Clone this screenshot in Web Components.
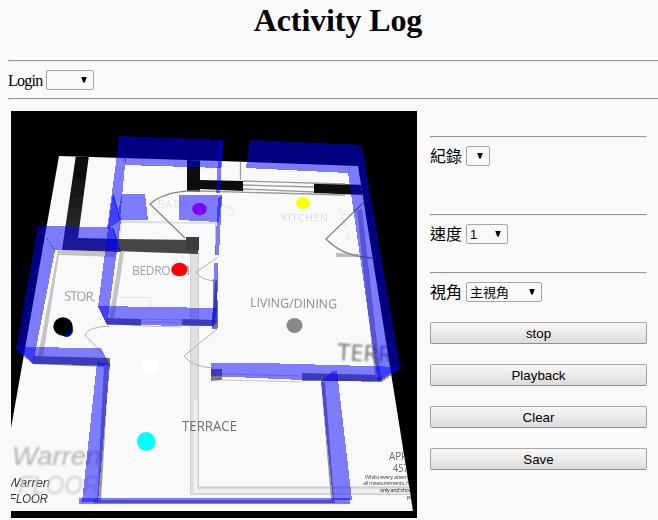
<!DOCTYPE html>
<html lang="zh-Hant">
<head>
<meta charset="utf-8">
<title>Activity Log</title>
<style>
html{height:100%;overflow:hidden}
body{margin:0;height:520px;overflow:hidden;background:#f9f9f9;color:#000;font-family:"Liberation Serif","Noto Sans CJK TC",serif;font-size:16px}
</style>
</head>
<body>
<activity-page></activity-page>
<script>
class UiElement extends HTMLElement {
  render(html) { this.attachShadow({mode:'open'}).innerHTML = html; }
}

customElements.define('rule-line', class extends UiElement {
  connectedCallback() { this.render(`<style>:host{display:block;box-sizing:border-box;height:2px;border:1px solid;border-color:#969696 #eee #eee #969696}</style>`); }
});

customElements.define('drop-box', class extends UiElement {
  connectedCallback() { this.render(`<style>
    :host{display:flex;box-sizing:border-box;height:20px;align-items:center;justify-content:space-between;border:1px solid #a6a6a6;border-radius:2px;padding:0 6px 0 3px;font:13px/18px "Liberation Sans","Noto Sans CJK TC",sans-serif;white-space:nowrap}
    svg{margin-left:auto;display:block}
    span{padding-top:1px}
    </style><span><slot></slot></span><svg width="6" height="6" viewBox="0 0 6 6"><path d="M.3 0h5.4L3.8 5.500H2.200z"/></svg>`); }
});

customElements.define('labeled-field', class extends UiElement {
  connectedCallback() { this.render(`<style>
    :host{display:flex;align-items:center;height:20px;gap:4px;line-height:20px;white-space:nowrap}
    span{padding-top:2px;line-height:18px}
    </style><span>${this.getAttribute('label')}</span><slot></slot>`); }
});

customElements.define('push-button', class extends UiElement {
  connectedCallback() { this.render(`<style>
    :host{display:block}
    button{display:block;width:100%;height:22px;box-sizing:border-box;padding:1px 0 0;border:1px solid;border-color:#a8a8a8 #a0a0a0 #8e8e8e;border-radius:2px;background:linear-gradient(#f6f6f6,#ececec 45%,#dcdcdc);color:#000;font:13.33px/18px "Liberation Sans",sans-serif}
    </style><button><slot></slot></button>`); }
});

customElements.define('floor-view', class extends UiElement {
  connectedCallback() { this.render(`<style>
    :host{display:block;width:406px;height:407px;background:#000}
    svg{display:block}
    .plan text{font-family:"Open Sans","Noto Sans",sans-serif}
    .thin{fill:none;stroke:#858585;stroke-width:1.3}
    .frame{fill:none;stroke:#c4c4c4;stroke-width:1}
    .faint{fill:none;stroke:#e4e4e4;stroke-width:1}
    .arc{fill:none;stroke:#b0b0b0;stroke-width:1}
    .brand text{font-family:"Liberation Sans",sans-serif;font-style:italic}
    .wall{fill:#00f;fill-opacity:.5}
    </style>
    <svg width="406" height="407" viewBox="11 111 406 407">
    <defs>
      <clipPath id="floor"><path d="M59 156L220 161 358 166 413 511H11V428z"/></clipPath>
      <linearGradient id="pier" x1="0" y1="0" x2="0" y2="1"><stop offset="0" stop-color="#050505"/><stop offset="1" stop-color="#353535"/></linearGradient>
      <filter id="soft" x="-5%" y="-20%" width="110%" height="140%"><feGaussianBlur stdDeviation=".45"/></filter>
      <filter id="smear" x="-5%" y="-20%" width="110%" height="140%"><feGaussianBlur stdDeviation=".9"/></filter>
    </defs>
    <g class="plan" clip-path="url(#floor)">
      <path fill="#f9f9f9" d="M11 111H417V511H11z"/>
      <g filter="url(#soft)">
        <path fill="#e0e0e0" d="M190 252H199V486H417V495H190z"/>
        <path fill="none" stroke="#f2f2f2" stroke-width="3" d="M195.500 400V491H417"/>
        <path fill="none" stroke="#cfcfcf" d="M190.500 252V494.500H417M198.500 252V487.500H417"/>
        <path fill="#c4c4c4" d="M58 250L117 252 116 257 59 255 43 357 38 356z"/>
        <path fill="#c4c4c4" d="M120 252L124 252 114 320 109 320z"/>
        <path fill="#dedede" d="M123 220L184 222 218 222 218 224 122 223 120 238 116 238 120 210z"/>
        <path fill="url(#pier)" d="M76 155H89L78 238 121 239 121 252 62 250z"/>
        <path fill="#444" d="M116 239L199 240 198 254 115 251z"/>
        <path fill="#3c3c3c" d="M186 237H199V250H186z"/>
        <path fill="#111" d="M187 156H200V180L243 181V191L200 189V192L187 191z"/>
        <path fill="#111" d="M314 183L365 185V195L314 193z"/>
        <path fill="#777" d="M33 356L110 358V367L33 364z"/>
        <path fill="#777" d="M107 318L141 319V326L107 324zM182 319L217 320V329H212V326L182 325z"/>
        <path fill="#777" d="M215 281H218V328H212z"/>
        <path fill="#777" d="M211 369H222V380L211 381zM302 373L381 375 382 381 302 381z"/>
        <path fill="#aaa" d="M357 210L362 209 381 378 375 377z"/>
        <path fill="#bbb" d="M336 253L360 254V257L336 257z"/>
        <path fill="#999" d="M104 364H109L101 501H97zM321 382L325 382 334 500 331 500zM94 500H335V503H94z"/>
      </g>
      <path class="thin" style="stroke:#999" d="M243 181L345 184M243 185L314 187M243 189L314 192M240.500 161V180M200 191L345 195"/>
      <path class="frame" d="M141 319L182 320M141 322L182 323M141 326L182 327M222 374L302 376M222 380L302 382M215.500 223V255"/>
      <path class="faint" d="M119 297.500H150.500V308M217.500 265V300M154 222L217 224M217 205Q245 209 228 216M339 207L346 228M342 214L356 216"/>
      <path class="thin" d="M200 191Q166 190 150 204L185 238M363 203L326 239Q343 257 373 258"/>
      <path class="arc" d="M109 326Q88 327 85 335L103 354M217 258L196 272Q201 281 218 281M217 329L184 356Q191 366 212 368"/>
      <g filter="url(#soft)">
        <text x="64" y="300.500" font-size="13" textLength="32" fill="#a0a0a0" transform="rotate(1 63 301)">STOR.</text>
        <text x="132" y="275" font-size="12" textLength="58" fill="#a3a3a3">BEDROOM</text>
        <text x="158" y="208" font-size="10.500" textLength="29" fill="#e2e2e2">BATH</text>
        <text x="281" y="221" font-size="10.500" textLength="47" fill="#dadada" transform="rotate(1 281 221)">KITCHEN</text>
        <text x="250" y="307" font-size="12.500" textLength="87" fill="#8c8c8c" transform="rotate(1 250 307)">LIVING/DINING</text>
        <text x="182" y="430.500" font-size="14.500" textLength="55" lengthAdjust="spacingAndGlyphs" fill="#6f6f6f">TERRACE</text>
        <text x="389" y="460" font-size="11" textLength="24" lengthAdjust="spacingAndGlyphs" fill="#666">APPR</text>
        <text x="393" y="472" font-size="11" textLength="23" lengthAdjust="spacingAndGlyphs" fill="#666">457.0</text>
        <text x="365" y="478.500" font-size="5.500" textLength="52" fill="#444">Whilst every attempt h</text>
        <text x="363" y="485" font-size="5.500" textLength="54" fill="#444">all measurements, floor</text>
        <text x="380" y="492" font-size="5.500" textLength="36" fill="#222">only and should</text>
        <text x="407" y="499" font-size="5.500" fill="#222">pr</text>
        <text x="345" y="240" font-size="9" fill="#e2e2e2" transform="rotate(5 345 240)">K</text>
        <g class="brand" fill="#333" font-size="13"><text x="8" y="487" textLength="42" lengthAdjust="spacingAndGlyphs">Warren</text><text x="9" y="502.500" textLength="39" lengthAdjust="spacingAndGlyphs">FLOOR</text></g>
      </g>
      <g filter="url(#smear)">
        <text x="337" y="360" font-size="23" textLength="70" lengthAdjust="spacingAndGlyphs" fill="#6c6c6c" transform="rotate(3 337 360)">TERRA</text>
        <g class="brand" fill="#b4b4b4" font-size="26"><text x="12" y="464.500" textLength="89" lengthAdjust="spacingAndGlyphs">Warren</text><text x="18" y="494" textLength="82" lengthAdjust="spacingAndGlyphs" fill="#cfcfcf">FLOOR</text></g>
      </g>
    </g>
    <g class="wall" shape-rendering="crispEdges">
      <path d="M118 136L223 140 221 168 125 165z"/>
      <path d="M119 140L125 165 120 220 119 222 107 229z"/>
      <path d="M113 193L121 220 107 325 98 307 108 228z"/>
      <path d="M122 194H145L148 220H120L119 208z"/>
      <path d="M179 195L222 195 219 222 179 220z"/>
      <path d="M219 141H223L220 193H216z"/>
      <path d="M218 198L222 196 219 255H215z"/>
      <path d="M214 263H218L217 322 212 328z"/>
      <path d="M98 306L217 308 214 326 107 325z"/>
      <path d="M38 226L107 227 114 228 120 250 54 250z"/>
      <path d="M38 226L55 250 33 364 16 350z"/>
      <path d="M16 347L101 348 110 365 33 364z"/>
      <path d="M97 362L110 364 98 502H82z"/>
      <path d="M79 498H350V504H79z"/>
      <path d="M321 381L333 371H337L352 500H333z"/>
      <path d="M211 363L263 363 402 367 399 370 381 382 302 380 211 376z"/>
      <path d="M348 172L362 146 400 367 378 382z"/>
      <path d="M250 140L362 145 348 173 246 168z"/>
    </g>
    <g fill="none" stroke="#00f" stroke-opacity=".42" stroke-width="1.300">
      <path d="M119 137L126 163M113 194L120 219M113 229L119 249"/>
    </g>
    <ellipse cx="199.500" cy="209" rx="7.200" ry="6.200" fill="#8000ff"/>
    <ellipse cx="303" cy="203" rx="7" ry="6" fill="#ff0"/>
    <ellipse cx="179.500" cy="269.500" rx="8" ry="6.800" fill="red"/>
    <ellipse cx="66.500" cy="330" rx="6.500" ry="7" fill="#00f"/>
    <ellipse cx="63" cy="326.500" rx="9.700" ry="9.300"/>
    <ellipse cx="294.500" cy="325.500" rx="8" ry="7.500" fill="#888"/>
    <ellipse cx="150.500" cy="366.500" rx="8.700" ry="8.300" fill="#fff"/>
    <ellipse cx="146.200" cy="441.500" rx="9.200" ry="9.500" fill="#0ff"/>
    </svg>`); }
});

customElements.define('control-panel', class extends UiElement {
  connectedCallback() { this.render(`<style>
    :host{display:flex;flex-direction:column;width:217px;padding-top:25px}
    labeled-field{margin-top:8px}
    .first{margin-bottom:48px}.second{margin-bottom:28px}
    push-button{margin-top:20px}
    </style>
    <rule-line></rule-line>
    <labeled-field class="first" label="紀錄"><drop-box style="width:24px"></drop-box></labeled-field>
    <rule-line></rule-line>
    <labeled-field class="second" label="速度"><drop-box style="width:42px">1</drop-box></labeled-field>
    <rule-line></rule-line>
    <labeled-field label="視角"><drop-box style="width:76px">主視角</drop-box></labeled-field>
    <push-button>stop</push-button><push-button>Playback</push-button><push-button>Clear</push-button><push-button>Save</push-button>`); }
});

customElements.define('activity-page', class extends UiElement {
  connectedCallback() { this.render(`<style>
    :host{display:block;width:660px;margin-left:8px}
    h1{margin:0;height:60px;box-sizing:border-box;padding-top:2px;font-size:32px;line-height:37px;text-align:center;letter-spacing:-.1px}
    .login{margin:8px 0;letter-spacing:-.75px}
    main{display:flex;gap:13px;padding:11px 0 0 3px}
    </style>
    <h1>Activity Log</h1>
    <rule-line></rule-line>
    <labeled-field class="login" label="Login"><drop-box style="width:48px"></drop-box></labeled-field>
    <rule-line></rule-line>
    <main><floor-view></floor-view><control-panel></control-panel></main>`); }
});
</script>
</body>
</html>
